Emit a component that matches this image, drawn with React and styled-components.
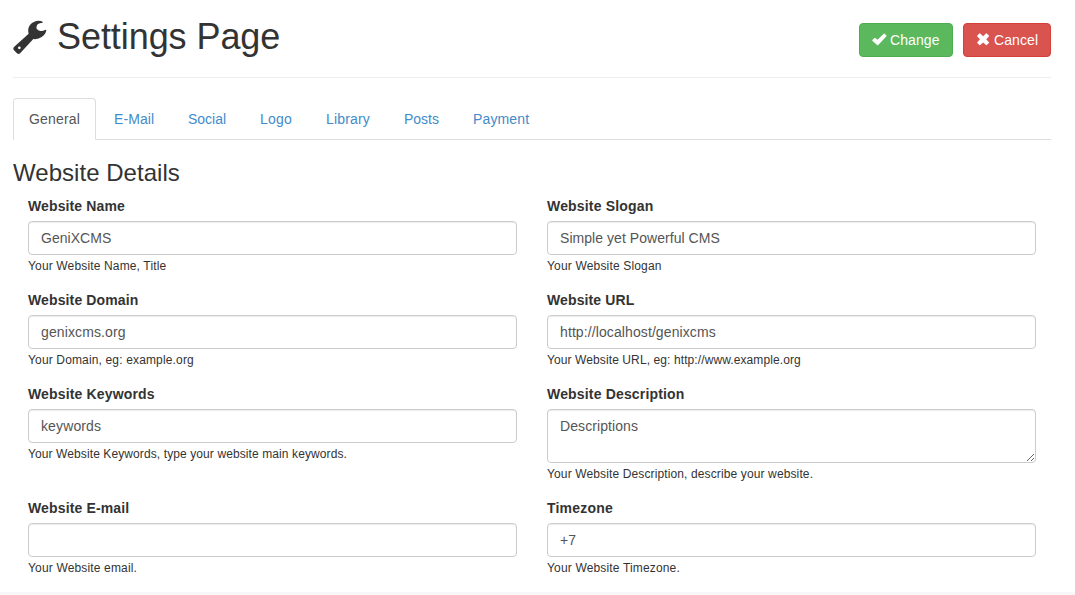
import React from "react";
import styled, { createGlobalStyle } from "styled-components";

const GlobalStyle = createGlobalStyle`
  * { box-sizing: border-box; }
  html { overflow: hidden; }
  body {
    margin: 0;
    background: #fff;
    color: #333;
    font: 14px/20px "Liberation Sans", Arial, sans-serif;
  }
`;

const Page = styled.main`
  height: 595px;
  display: flex;
  flex-direction: column;
`;

const Content = styled.div`
  flex: 1;
  padding: 0 24px 0 13px;
`;

const Header = styled.header`
  display: flex;
  justify-content: space-between;
  height: 78px;
  border-bottom: 1px solid #eee;
`;

const Title = styled.h1`
  display: flex;
  margin: 17px 0 0;
  font-size: 36px;
  font-weight: 400;
  line-height: 40px;
  white-space: pre;
  letter-spacing: -0.07px;
`;

const WrenchIcon = styled.svg`
  width: 34px;
  height: 34px;
  margin: 3px 10px 0 0;
  fill: #333;
`;

const Actions = styled.div`
  display: flex;
  gap: 10px;
  padding-top: 23px;
`;

const Button = styled.button`
  display: flex;
  align-items: center;
  width: ${(p) => p.$width}px;
  height: 34px;
  padding: 0 12px;
  border: 1px solid ${(p) => p.$border};
  border-radius: 4px;
  background: ${(p) => p.$color};
  color: #fff;
  font: inherit;
  letter-spacing: 0.1px;
  white-space: nowrap;
`;

const ButtonIcon = styled.svg`
  width: 15px;
  height: 14px;
  margin-right: 3px;
  flex: none;
  fill: #fff;
`;

const Tabs = styled.nav`
  display: flex;
  gap: 2px;
  height: 42px;
  margin-top: 20px;
  border-bottom: 1px solid #ddd;
`;

const Tab = styled.a`
  height: 42px;
  width: ${(p) => p.$width}px;
  padding: 10px 15px;
  border: 1px solid ${(p) => (p.$active ? "#ddd" : "transparent")};
  border-bottom-color: ${(p) => (p.$active ? "#fff" : "transparent")};
  border-radius: 4px 4px 0 0;
  background: ${(p) => (p.$active ? "#fff" : "transparent")};
  color: ${(p) => (p.$active ? "#555" : "#428bca")};
  letter-spacing: ${(p) => p.$spacing || 0}px;
  white-space: nowrap;
`;

const SectionTitle = styled.h3`
  margin: 20px 0 10px;
  font-size: 24px;
  font-weight: 400;
  line-height: 26px;
  letter-spacing: 0.04px;
`;

const Form = styled.form`
  display: grid;
  grid-template-columns: 489px 489px;
  column-gap: 30px;
  row-gap: 15px;
  padding: 0 15px;
`;

const Field = styled.div`
  display: flex;
  flex-direction: column;
  align-items: flex-start;
`;

const Label = styled.label`
  margin-bottom: 5px;
  font-weight: 700;
  letter-spacing: ${(p) => p.$spacing || 0}px;
`;

const Input = styled.input`
  display: block;
  width: 100%;
  height: 34px;
  padding: 6px 12px;
  border: 1px solid #ccc;
  border-radius: 4px;
  outline: 0;
  background: #fff;
  box-shadow: inset 0 1px 1px rgba(0, 0, 0, 0.075);
  color: #555;
  font: inherit;
  letter-spacing: ${(p) => p.$spacing || 0}px;
`;

const TextArea = styled(Input).attrs({ as: "textarea" })`
  height: 54px;
  overflow: hidden;
  resize: vertical;
`;

const Help = styled.small`
  height: 20px;
  font-size: 12px;
  line-height: 22px;
  letter-spacing: ${(p) => p.$spacing || 0}px;
`;

const Footer = styled.footer`
  height: 3px;
  background: #f8f8f8;
`;

const tabs = [
  { name: "General", width: 83, spacing: 0.16 },
  { name: "E-Mail", width: 72, spacing: 0.08 },
  { name: "Social", width: 70 },
  { name: "Logo", width: 64, spacing: 0.22 },
  { name: "Library", width: 76, spacing: 0.16 },
  { name: "Posts", width: 67 },
  { name: "Payment", width: 88, spacing: 0.14 },
];

const fields = [
  { label: "Website Name", ls: 0.12, value: "GeniXCMS", vs: 0.03, help: "Your Website Name, Title", hs: 0.15 },
  { label: "Website Slogan", ls: 0.17, value: "Simple yet Powerful CMS", vs: 0.05, help: "Your Website Slogan", hs: 0.17 },
  { label: "Website Domain", ls: 0.13, value: "genixcms.org", vs: 0.12, help: "Your Domain, eg: example.org", hs: 0.15 },
  { label: "Website URL", ls: 0.12, value: "http://localhost/genixcms", vs: 0.1, help: "Your Website URL, eg: http://www.example.org", hs: 0.1 },
  { label: "Website Keywords", ls: 0.16, value: "keywords", vs: 0.12, help: "Your Website Keywords, type your website main keywords.", hs: 0.1 },
  { label: "Website Description", ls: 0.17, value: "Descriptions", vs: 0.08, help: "Your Website Description, describe your website.", hs: 0.125, area: true },
  { label: "Website E-mail", ls: 0.14, value: "", help: "Your Website email.", hs: 0.16 },
  { label: "Timezone", ls: 0.2, value: "+7", help: "Your Website Timezone.", hs: 0.16 },
];

export default function App() {
  return (
    <Page>
      <GlobalStyle />
      <Content>
        <Header>
          <Title>
            <WrenchIcon viewBox="39 60 102 102">
              <path
                fillRule="evenodd"
                d="M128 65 Q116 60 103 65 Q87 72 85 87 Q84 95 86 101 L42 141 Q38 146 42 151 L51 160 Q56 164 61 159 L100 117 Q114 119 125 111 Q138 102 139 90 L137 89 Q128 94 121 93 Q114 92 110 86 Q108 79 113 73 Q118 69 128 68 Z M58 139.500 A4 4 0 1 0 58.1 147.500 A4 4 0 1 0 58 139.500 Z"
              />
            </WrenchIcon>
            Settings Page
          </Title>
          <Actions>
            <Button type="button" $width={94} $color="#5cb85c" $border="#4cae4c">
              <ButtonIcon viewBox="0 0.5 15 14">
                <path d="M.4 7.6 2.3 5.6Q2.8 5.2 3.3 5.6L5.5 7.3 11.7 1.2Q12.2.8 12.7 1.3L14.4 3Q14.8 3.5 14.3 4L6.2 12.6Q5.6 13.1 5.1 12.6L.5 8.4Q.1 8 .4 7.6Z" />
              </ButtonIcon>
              Change
            </Button>
            <Button type="button" $width={88} $color="#d9534f" $border="#d43f3a">
              <ButtonIcon viewBox="0 0.6 15 14">
                <path d="M4.2 1.1 7.1 3.8 10 1.1Q10.4.8 10.8 1.1L12.9 3.2Q13.2 3.6 12.9 4L10.2 6.9 12.9 9.8Q13.2 10.2 12.9 10.6L10.8 12.7Q10.4 13 10 12.7L7.1 10 4.2 12.7Q3.8 13 3.4 12.7L1.3 10.6Q1 10.2 1.3 9.8L4 6.9 1.3 4Q1 3.6 1.3 3.2L3.4 1.1Q3.8.8 4.2 1.1Z" />
              </ButtonIcon>
              Cancel
            </Button>
          </Actions>
        </Header>
        <Tabs>
          {tabs.map((t, i) => (
            <Tab key={t.name} $active={i === 0} $width={t.width} $spacing={t.spacing}>
              {t.name}
            </Tab>
          ))}
        </Tabs>
        <SectionTitle>Website Details</SectionTitle>
        <Form>
          {fields.map((f) => {
            const Control = f.area ? TextArea : Input;
            return (
              <Field key={f.label}>
                <Label $spacing={f.ls}>{f.label}</Label>
                <Control defaultValue={f.value} $spacing={f.vs} />
                <Help $spacing={f.hs}>{f.help}</Help>
              </Field>
            );
          })}
        </Form>
      </Content>
      <Footer />
    </Page>
  );
}
